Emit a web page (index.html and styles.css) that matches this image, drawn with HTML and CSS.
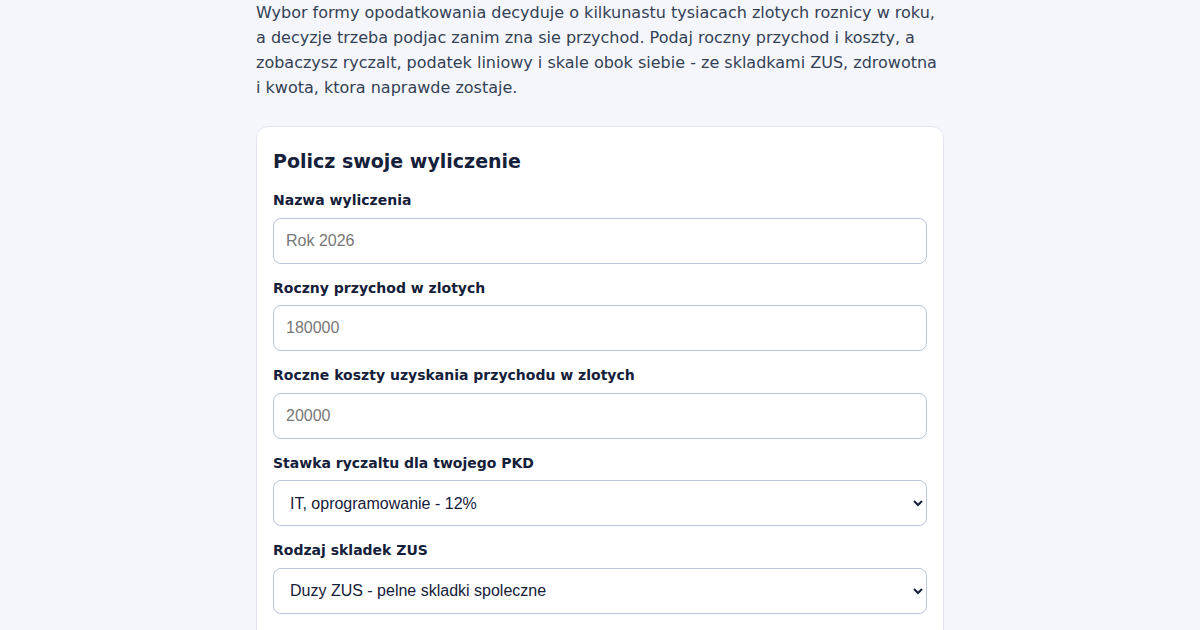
FILE: index.html
```html
<!DOCTYPE html>
<html lang="pl">
<head>
  <meta charset="UTF-8" />
  <title>Ryczalt, liniowy czy skala - kalkulator</title>
  <link rel="stylesheet" href="styles.css">
</head>
<body>
  <main class="page">
    <p class="intro">Wybor formy opodatkowania decyduje o kilkunastu tysiacach zlotych roznicy w roku, a decyzje trzeba podjac zanim zna sie przychod. Podaj roczny przychod i koszty, a zobaczysz ryczalt, podatek liniowy i skale obok siebie - ze skladkami ZUS, zdrowotna i kwota, ktora naprawde zostaje.</p>

    <form class="card" onsubmit="return false;">
      <h2>Policz swoje wyliczenie</h2>

      <div class="field">
        <label for="name">Nazwa wyliczenia</label>
        <input type="text" id="name" placeholder="Rok 2026">
      </div>

      <div class="field">
        <label for="revenue">Roczny przychod w zlotych</label>
        <input type="number" id="revenue" placeholder="180000">
      </div>

      <div class="field">
        <label for="costs">Roczne koszty uzyskania przychodu w zlotych</label>
        <input type="number" id="costs" placeholder="20000">
      </div>

      <div class="field">
        <label for="rate">Stawka ryczaltu dla twojego PKD</label>
        <select id="rate">
          <option>IT, oprogramowanie - 12%</option>
          <option>Uslugi niematerialne - 15%</option>
          <option>Handel - 3%</option>
          <option>Wolne zawody - 17%</option>
        </select>
      </div>

      <div class="field">
        <label for="zus">Rodzaj skladek ZUS</label>
        <select id="zus">
          <option>Duzy ZUS - pelne skladki spoleczne</option>
          <option>Preferencyjny ZUS</option>
          <option>Ulga na start</option>
        </select>
      </div>
    </form>
  </main>
</body>
</html>
```

FILE: styles.css
```css
body {
  margin: 0;
  background-color: #f5f6fb;
  font-family: "DejaVu Sans", sans-serif;
  color: #1e293b;
}

.page {
  max-width: 688px;
  margin: 0 auto;
  padding: 0 0 40px;
}

.intro {
  margin: 0 0 26px;
  font-size: 16px;
  line-height: 25px;
  color: #334155;
}

.card {
  background-color: #fff;
  border: 1px solid #e1e5f0;
  border-radius: 12px;
  padding: 20px 16px 16px;
}

.card h2 {
  margin: 0 0 17px;
  font-size: 19px;
  line-height: 28px;
  color: #15203a;
}

.field {
  margin-bottom: 16px;
}

.field label {
  display: block;
  margin-bottom: 8px;
  font-size: 14px;
  line-height: 17.5px;
  font-weight: bold;
  color: #15203a;
}

.field input,
.field select {
  display: block;
  box-sizing: border-box;
  width: 100%;
  height: 46px;
  border: 1px solid #b9c4dc;
  border-radius: 8px;
  background-color: #fff;
  font-family: "Liberation Sans", Arial, sans-serif;
  font-size: 16px;
  color: #15203a;
}

.field input {
  padding: 0 12px;
}

.field select {
  padding: 0 12px;
}

.field input::placeholder {
  color: #777;
}
```
